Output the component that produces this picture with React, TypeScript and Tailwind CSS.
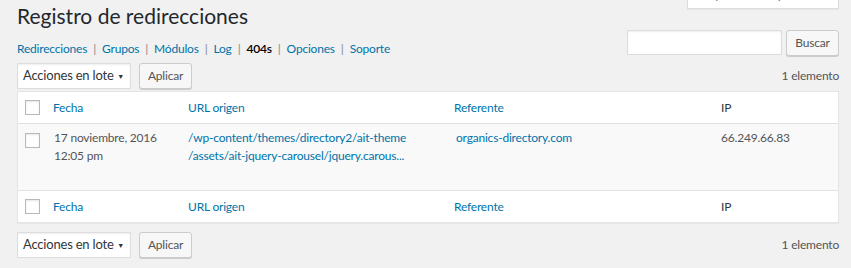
const COLS = "grid grid-cols-[27px_135px_266px_267px_1fr]";

function Checkbox() {
  return (
    <span className="block h-[15px] w-[15px] border border-[#b4b9be] bg-white shadow-[inset_0_1px_2px_rgba(0,0,0,0.1)]" />
  );
}

function BulkActions() {
  return (
    <div className="flex items-center justify-between">
      <div className="flex items-center gap-[8px]">
        <div className="flex h-[26px] w-[114px] items-center justify-between whitespace-nowrap border border-[#ddd] bg-white pl-[5px] pr-[6px] text-[13px] text-[#32373c] shadow-[inset_0_1px_2px_rgba(0,0,0,0.07)]">
          <span>Acciones en lote</span>
          <span className="text-[7px] text-[#333]">▼</span>
        </div>
        <button className="h-[26px] w-[53px] rounded-[3px] border border-[#ccc] bg-[#f7f7f7] text-[#555] shadow-[0_1px_0_#ccc]">
          Aplicar
        </button>
      </div>
      <span className="text-[#555]">1 elemento</span>
    </div>
  );
}

function HeadRow({ top }: { top?: boolean }) {
  return (
    <div
      className={`${COLS} h-[32px] items-center bg-white ${
        top ? "border-b border-[#e1e1e1]" : "border-t border-[#e1e1e1]"
      }`}
    >
      <div className="pl-[7px]">
        <Checkbox />
      </div>
      <a className="pl-[8px] text-[#0073aa]">Fecha</a>
      <a className="pl-[8px] text-[#0073aa]">URL origen</a>
      <a className="pl-[8px] text-[#0073aa]">Referente</a>
      <span className="pl-[8px] text-[#32373c]">IP</span>
    </div>
  );
}

const NAV = ["Redirecciones", "Grupos", "Módulos", "Log", "404s", "Opciones", "Soporte"];

export default function App() {
  return (
    <div className="min-h-screen bg-[#f1f1f1] pl-[17px] pr-[12px] font-['Lato',sans-serif] text-[12px] tracking-[-0.2px] text-[#444]">
      <div className="flex items-start justify-between">
        <h1 className="pt-[2px] text-[21px] leading-[28px] tracking-normal text-[#23282d]">
          Registro de redirecciones
        </h1>
        <div className="-mt-[18px] flex h-[27px] w-[152px] items-center justify-center border border-t-0 border-[#ddd] bg-white text-[13px] text-[#72777c] shadow-[0_1px_1px_rgba(0,0,0,0.04)]">
          Opciones de pantalla
        </div>
      </div>

      <div className="flex items-start justify-between">
        <nav className="flex items-center gap-[6px] pt-[11px] leading-[15px] text-[#666]">
          {NAV.map((item, i) => (
            <span key={item} className="flex items-center gap-[6px]">
              {item === "404s" ? (
                <span className="font-semibold text-black">{item}</span>
              ) : (
                <a className="text-[#0073aa]">{item}</a>
              )}
              {i < NAV.length - 1 && <span className="text-[#888]">|</span>}
            </span>
          ))}
        </nav>
        <div className="flex items-start gap-[4px]">
          <input className="h-[25px] w-[155px] border border-[#ddd] bg-white shadow-[inset_0_1px_2px_rgba(0,0,0,0.07)] outline-none" />
          <button className="h-[26px] w-[53px] rounded-[3px] border border-[#ccc] bg-[#f7f7f7] text-[#555] shadow-[0_1px_0_#ccc]">
            Buscar
          </button>
        </div>
      </div>

      <div className="mt-[7px]">
        <BulkActions />
      </div>

      <div className="mt-[2px] border border-[#e5e5e5] bg-white shadow-[0_1px_1px_rgba(0,0,0,0.04)]">
        <HeadRow top />
        <div className={`${COLS} h-[66px] items-start bg-[#f9f9f9] pt-[5px] leading-[18px]`}>
          <div className="pl-[7px] pt-[4px]">
            <Checkbox />
          </div>
          <div className="pl-[9px] text-[#555]">
            17 noviembre, 2016
            <br />
            12:05 pm
          </div>
          <a className="pl-[8px] text-[#0073aa]">
            /wp-content/themes/directory2/ait-theme
            <br />
            /assets/ait-jquery-carousel/jquery.carous...
          </a>
          <a className="pl-[10px] text-[#0073aa]">organics-directory.com</a>
          <span className="pl-[8px] text-[#555]">66.249.66.83</span>
        </div>
        <HeadRow />
      </div>

      <div className="mt-[9px]">
        <BulkActions />
      </div>
    </div>
  );
}
